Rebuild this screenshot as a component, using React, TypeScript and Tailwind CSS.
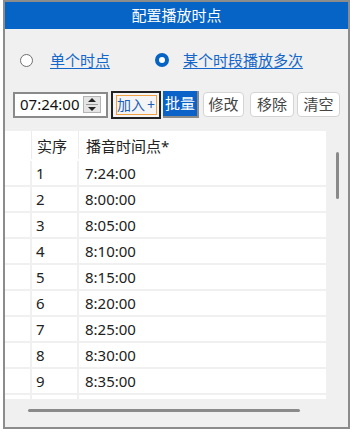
import React from "react";

const font = { fontFamily: '"Noto Sans", "Noto Sans CJK SC", sans-serif' };

const rows = [
  ["1", "7:24:00"],
  ["2", "8:00:00"],
  ["3", "8:05:00"],
  ["4", "8:10:00"],
  ["5", "8:15:00"],
  ["6", "8:20:00"],
  ["7", "8:25:00"],
  ["8", "8:30:00"],
  ["9", "8:35:00"],
];

export default function App() {
  return (
    <div className="w-[353px] h-[437px] bg-white overflow-hidden" style={font}>
      <div className="ml-[3px] w-[347px] h-[429px] border-2 border-[#8c8c8c] bg-[#f0f0f0] flex flex-col">
        {/* title */}
        <div className="h-[27px] bg-[#0664c6] text-white text-[15px] leading-[27px] text-center">
          配置播放时点
        </div>
        {/* radios */}
        <div className="h-[61px] flex items-center pl-[15px] pt-[1px]">
          <div className="flex items-center">
            <span className="w-[13px] h-[13px] rounded-full border border-[#6f6f6f] bg-white" />
            <span className="ml-[17px] text-[15px] text-[#1466c8] underline underline-offset-2">单个时点</span>
          </div>
          <div className="flex items-center ml-[45px]">
            <span className="w-[14px] h-[14px] rounded-full border-[4px] border-[#0563c4] bg-white" />
            <span className="ml-[14px] text-[15px] text-[#1466c8] underline underline-offset-2">某个时段播放多次</span>
          </div>
        </div>
        {/* toolbar */}
        <div className="flex items-center h-[29px] pl-[8px]">
          <div className="w-[95px] h-[26px] border-2 border-[#8a8a8a] bg-white flex items-center pl-[5px]">
            <span className="text-[15px] text-[#111] leading-none">07:24:00</span>
            <div className="ml-[3px] w-[18px] h-[17px] bg-[#e4e4e4] border border-[#b4b4b4] flex flex-col items-center justify-center gap-[2px]">
              <svg width="8" height="4" viewBox="0 0 8 4"><path d="M0 4 L4 0 L8 4 Z" fill="#222" /></svg>
              <div className="w-[12px] h-px bg-[#9a9a9a]" />
              <svg width="8" height="4" viewBox="0 0 8 4"><path d="M0 0 L4 4 L8 0 Z" fill="#222" /></svg>
            </div>
          </div>
          <div className="ml-[3px] w-[50px] h-[28px] border-2 border-[#222] bg-[#f4f4f4] flex items-center justify-center">
            <div className="w-[41px] h-[20px] border border-[#f0a040] flex items-center justify-center overflow-visible">
              <span className="text-[14px] text-[#1c5fb8] leading-none whitespace-nowrap">加入<span className="ml-[2px]">+</span></span>
            </div>
          </div>
          <div className="ml-[2px] w-[36px] h-[27px] bg-[#0a62c8] border-r-2 border-b-2 border-[#8a8a8a] flex items-center justify-center">
            <span className="text-[15px] text-white leading-none">批量</span>
          </div>
          <div className="ml-[4px] w-[41px] h-[25px] bg-white rounded-[4px] border border-[#d4d4d4] flex items-center justify-center">
            <span className="text-[15px] text-[#444] leading-none">修改</span>
          </div>
          <div className="ml-[6px] w-[44px] h-[25px] bg-white rounded-[4px] border border-[#d4d4d4] flex items-center justify-center">
            <span className="text-[15px] text-[#444] leading-none">移除</span>
          </div>
          <div className="ml-[3px] w-[43px] h-[25px] bg-white rounded-[4px] border border-[#d4d4d4] flex items-center justify-center">
            <span className="text-[15px] text-[#444] leading-none">清空</span>
          </div>
        </div>
        {/* table area */}
        <div className="mt-[12px] flex">
          <div className="w-[321px] h-[268px] bg-white flex flex-col overflow-hidden">
            <div className="h-[30px] flex shrink-0">
              <div className="w-[27px] border-r border-[#ececec] mb-[2px]" />
              <div className="w-[47px] border-r border-[#ececec] mb-[2px] pl-[5px] text-[15px] text-[#222] leading-[30px]">实序</div>
              <div className="pl-[7px] text-[15px] text-[#222] leading-[30px]">播音时间点*</div>
            </div>
            {rows.map(([n, t]) => (
              <div key={n} className="h-[26px] flex shrink-0 border-b-2 border-[#f0f0f0]">
                <div className="w-[27px] border-r-2 border-[#f0f0f0]" />
                <div className="w-[47px] border-r-2 border-[#f0f0f0] pl-[4px] text-[15px] text-[#222] leading-[25px]">{n}</div>
                <div className="pl-[6px] text-[15px] text-[#222] leading-[25px]">{t}</div>
              </div>
            ))}
            <div className="flex flex-1">
              <div className="w-[27px] border-r-2 border-[#f0f0f0]" />
              <div className="w-[47px] border-r-2 border-[#f0f0f0]" />
            </div>
          </div>
          <div className="flex-1 flex justify-center pt-[21px]">
            <div className="w-[3px] h-[47px] bg-[#8a8a8a] rounded-full" />
          </div>
        </div>
        <div className="mt-[10px] ml-[23px] w-[272px] h-[3px] bg-[#8a8a8a] rounded-full" />
      </div>
    </div>
  );
}
